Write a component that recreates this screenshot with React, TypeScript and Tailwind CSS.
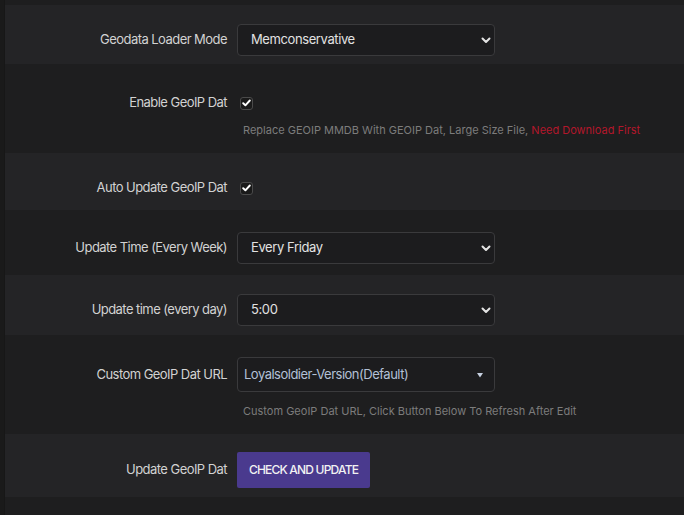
import React, { useState } from "react";

interface RowProps {
  label: string;
  className: string;
  labelHeight: string;
  children: React.ReactNode;
}

const font = { fontFamily: "Inter, 'Noto Sans', sans-serif" };

const Row: React.FC<RowProps> = ({ label, className, labelHeight, children }) => {
  return (
    <div className={`flex items-start ${className}`}>
      <div
        className={`w-[232px] shrink-0 pr-[10px] flex items-center justify-end text-[13px] tracking-[-0.55px] text-[#d2d2d2] ${labelHeight}`}
      >
        {label}
      </div>
      <div className="flex flex-col">{children}</div>
    </div>
  );
};

interface SelectProps {
  value: string;
  options: string[];
  onChange: (v: string) => void;
}

const Select: React.FC<SelectProps> = ({ value, options, onChange }) => {
  return (
    <div className="relative w-[258px] h-[32px]">
      <select
        value={value}
        onChange={(e) => onChange(e.target.value)}
        className="appearance-none w-full h-full bg-[#1c1c1e] border border-[#3a3a3c] rounded-[4px] pl-[13px] pr-8 text-[13px] tracking-[-0.4px] text-[#e2e2e2] outline-none"
        style={font}
      >
        {options.map((o) => (
          <option key={o} value={o}>
            {o}
          </option>
        ))}
      </select>
      <svg
        className="absolute right-[4px] top-[13px] pointer-events-none"
        width="10"
        height="7"
        viewBox="0 0 10 7"
        fill="none"
      >
        <path d="M1.5 1.5L5 5L8.5 1.5" stroke="#e4e4e4" strokeWidth="2" strokeLinecap="round" strokeLinejoin="round" />
      </svg>
    </div>
  );
};

interface CheckProps {
  checked: boolean;
  onToggle: () => void;
}

const Check: React.FC<CheckProps> = ({ checked, onToggle }) => {
  return (
    <div className="h-[20px] flex items-center">
      <button
        type="button"
        onClick={onToggle}
        className="ml-[3px] w-[13px] h-[13px] rounded-[3px] border border-[#4a4a4a] bg-[#1a1a1a] flex items-center justify-center"
      >
        {checked && (
          <svg width="9" height="8" viewBox="0 0 9 8" fill="none">
            <path d="M1.2 4.2L3.4 6.3L7.8 1.5" stroke="#ffffff" strokeWidth="1.9" strokeLinecap="round" strokeLinejoin="round" />
          </svg>
        )}
      </button>
    </div>
  );
};

const App: React.FC = () => {
  const [mode, setMode] = useState("Memconservative");
  const [enableDat, setEnableDat] = useState(true);
  const [autoUpdate, setAutoUpdate] = useState(true);
  const [week, setWeek] = useState("Every Friday");
  const [hour, setHour] = useState("5:00");

  return (
    <div className="w-[684px] h-[515px] bg-[#1e1e1f] flex overflow-hidden" style={font}>
      <div className="w-[5px] shrink-0 bg-[#1a1a1a] border-r border-[#171717]"></div>
      <div className="flex-1 pt-[5px] flex flex-col">
        <Row label="Geodata Loader Mode" className="bg-[#242426] pt-[19px] pb-[8px]" labelHeight="h-[32px]">
          <Select value={mode} onChange={setMode} options={["Memconservative", "Standard"]} />
        </Row>

        <Row label="Enable GeoIP Dat" className="pt-[29px] pb-[15px]" labelHeight="h-[20px]">
          <Check checked={enableDat} onToggle={() => setEnableDat(!enableDat)} />
          <div className="mt-[9px] h-[16px] leading-[16px] pl-[6px] text-[11px] text-[#7c7c7c]">
            Replace GEOIP MMDB With GEOIP Dat, Large Size File,{" "}
            <span className="text-[#b3172b]">Need Download First</span>
          </div>
        </Row>

        <Row label="Auto Update GeoIP Dat" className="bg-[#242426] pt-[25px] pb-[12px]" labelHeight="h-[20px]">
          <Check checked={autoUpdate} onToggle={() => setAutoUpdate(!autoUpdate)} />
        </Row>

        <Row label="Update Time (Every Week)" className="pt-[22px] pb-[11px]" labelHeight="h-[32px]">
          <Select
            value={week}
            onChange={setWeek}
            options={["Every Day", "Every Monday", "Every Friday", "Every Sunday"]}
          />
        </Row>

        <Row label="Update time (every day)" className="bg-[#242426] pt-[19px] pb-[9px]" labelHeight="h-[32px]">
          <Select value={hour} onChange={setHour} options={["0:00", "5:00", "12:00"]} />
        </Row>

        <Row label="Custom GeoIP Dat URL" className="pt-[22px] pb-[15px]" labelHeight="h-[35px]">
          <div className="relative w-[258px] h-[35px] bg-[#1c1c1e] border border-[#3a3a3c] rounded-[4px] flex items-center pl-[6px]">
            <span className="text-[13px] tracking-[-0.5px] text-[#b3c0d6]">Loyalsoldier-Version(Default)</span>
            <svg className="absolute right-[11px] top-[15px]" width="6" height="5" viewBox="0 0 6 5">
              <path d="M0 0H6L3 4.5Z" fill="#c6d0e0" />
            </svg>
          </div>
          <div className="mt-[11px] h-[16px] leading-[16px] pl-[6px] text-[11px] text-[#7c7c7c]">
            Custom GeoIP Dat URL, Click Button Below To Refresh After Edit
          </div>
        </Row>

        <Row label="Update GeoIP Dat" className="bg-[#242426] pt-[18px] pb-[9px]" labelHeight="h-[36px]">
          <button
            type="button"
            className="h-[36px] w-[133px] rounded-[2px] bg-[#4a3a8e] text-[12px] font-medium tracking-[-0.8px] text-[#f2f2f2] flex items-center justify-center"
          >
            CHECK AND UPDATE
          </button>
        </Row>
      </div>
    </div>
  );
};

export default App;
